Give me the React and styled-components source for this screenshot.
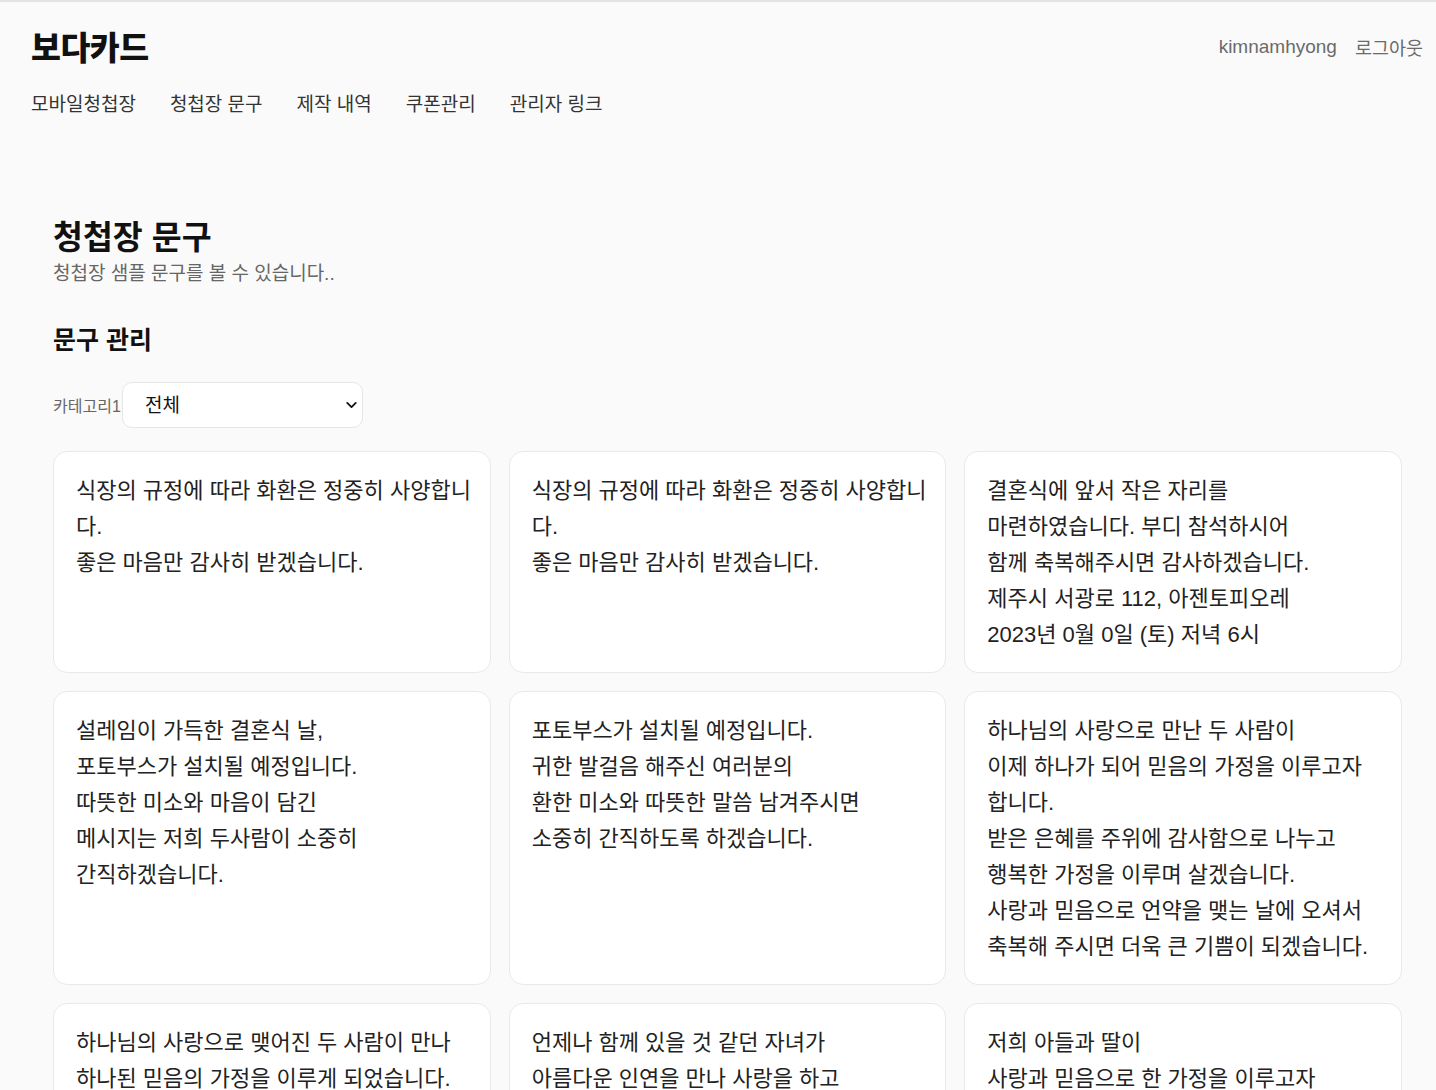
import React from 'react';
import styled, { createGlobalStyle } from 'styled-components';
import { ChevronDown } from 'lucide-react';

const GlobalStyle = createGlobalStyle`
  html, body {
    margin: 0;
    padding: 0;
    background: #fafafa;
  }
  body {
    font-family: "Liberation Sans", "Noto Sans CJK KR", sans-serif;
    color: #222;
  }
  * {
    box-sizing: border-box;
  }
`;

const phrases = [
  '식장의 규정에 따라 화환은 정중히 사양합니다.\n좋은 마음만 감사히 받겠습니다.',
  '식장의 규정에 따라 화환은 정중히 사양합니다.\n좋은 마음만 감사히 받겠습니다.',
  '결혼식에 앞서 작은 자리를\n마련하였습니다. 부디 참석하시어\n함께 축복해주시면 감사하겠습니다.\n제주시 서광로 112, 아젠토피오레\n2023년 0월 0일 (토) 저녁 6시',
  '설레임이 가득한 결혼식 날,\n포토부스가 설치될 예정입니다.\n따뜻한 미소와 마음이 담긴\n메시지는 저희 두사람이 소중히\n간직하겠습니다.',
  '포토부스가 설치될 예정입니다.\n귀한 발걸음 해주신 여러분의\n환한 미소와 따뜻한 말씀 남겨주시면\n소중히 간직하도록 하겠습니다.',
  '하나님의 사랑으로 만난 두 사람이\n이제 하나가 되어 믿음의 가정을 이루고자 합니다.\n받은 은혜를 주위에 감사함으로 나누고\n행복한 가정을 이루며 살겠습니다.\n사랑과 믿음으로 언약을 맺는 날에 오셔서\n축복해 주시면 더욱 큰 기쁨이 되겠습니다.',
  '하나님의 사랑으로 맺어진 두 사람이 만나\n하나된 믿음의 가정을 이루게 되었습니다.',
  '언제나 함께 있을 것 같던 자녀가\n아름다운 인연을 만나 사랑을 하고',
  '저희 아들과 딸이\n사랑과 믿음으로 한 가정을 이루고자',
];

const Page = () => {
  return (
    <>
      <GlobalStyle />
      <Header>
        <TopRow>
          <Logo>보다카드</Logo>
          <UserBox>
            <UserName>kimnamhyong</UserName>
            <Logout>로그아웃</Logout>
          </UserBox>
        </TopRow>
        <Nav>
          <NavLink>모바일청첩장</NavLink>
          <NavLink>청첩장 문구</NavLink>
          <NavLink>제작 내역</NavLink>
          <NavLink>쿠폰관리</NavLink>
          <NavLink>관리자 링크</NavLink>
        </Nav>
      </Header>
      <Main>
        <Title>청첩장 문구</Title>
        <SubTitle>청첩장 샘플 문구를 볼 수 있습니다..</SubTitle>
        <SectionTitle>문구 관리</SectionTitle>
        <FilterRow>
          <FilterLabel>카테고리1</FilterLabel>
          <SelectWrap>
            <Select defaultValue="all">
              <option value="all">전체</option>
            </Select>
            <Chevron>
              <ChevronDown size={17} strokeWidth={2.6} />
            </Chevron>
          </SelectWrap>
        </FilterRow>
        <CardGrid>
          {phrases.map((text, i) => (
            <Card key={i}>{text}</Card>
          ))}
        </CardGrid>
      </Main>
    </>
  );
};

const Header = styled.header`
  border-top: 2px solid #e3e3e3;
  padding: 27px 13px 0 31px;
`;

const TopRow = styled.div`
  display: flex;
  justify-content: space-between;
  align-items: center;
  height: 40px;
`;

const Logo = styled.div`
  font-size: 32.5px;
  font-weight: 800;
  color: #111;
  line-height: 40px;
  letter-spacing: -0.5px;
`;

const UserBox = styled.div`
  display: flex;
  align-items: center;
  gap: 18px;
  padding-bottom: 4px;
  color: #6b6b6b;
`;

const UserName = styled.span`
  font-size: 19px;
`;

const Logout = styled.span`
  font-size: 18.5px;
`;

const Nav = styled.nav`
  display: flex;
  gap: 34px;
  margin-top: 23px;
  line-height: 26px;
`;

const NavLink = styled.a`
  font-size: 19px;
  color: #333;
  text-decoration: none;
`;

const Main = styled.main`
  padding: 100px 34px 40px 53px;
`;

const Title = styled.h1`
  margin: 0;
  font-size: 32.5px;
  font-weight: 700;
  line-height: 40px;
  color: #111;
`;

const SubTitle = styled.p`
  margin: 4px 0 0;
  font-size: 19px;
  line-height: 24px;
  color: #666;
`;

const SectionTitle = styled.h2`
  margin: 38px 0 0;
  font-size: 25px;
  font-weight: 700;
  line-height: 32px;
  color: #111;
`;

const FilterRow = styled.div`
  display: flex;
  align-items: center;
  margin-top: 26px;
`;

const FilterLabel = styled.label`
  font-size: 16px;
  color: #666;
  width: 69px;
`;

const SelectWrap = styled.div`
  position: relative;
  width: 241px;
  height: 46px;
`;

const Select = styled.select`
  appearance: none;
  width: 100%;
  height: 100%;
  padding: 0 40px 0 22px;
  border: 1px solid #e6e6e6;
  border-radius: 10px;
  background: #fff;
  font-family: inherit;
  font-size: 19px;
  color: #111;
  outline: none;
`;

const Chevron = styled.span`
  position: absolute;
  right: 0;
  top: 50%;
  transform: translateY(-50%);
  display: flex;
  justify-content: center;
  color: #111;
  pointer-events: none;
  width: 24px;
`;

const CardGrid = styled.div`
  display: grid;
  grid-template-columns: repeat(3, 1fr);
  gap: 18px;
  margin-top: 23px;
`;

const Card = styled.div`
  background: #fff;
  border: 1px solid #e9e9e9;
  border-radius: 14px;
  padding: 21px 16px 19px 22px;
  font-size: 22px;
  line-height: 36px;
  color: #222;
  white-space: pre-wrap;
`;

export default Page;
